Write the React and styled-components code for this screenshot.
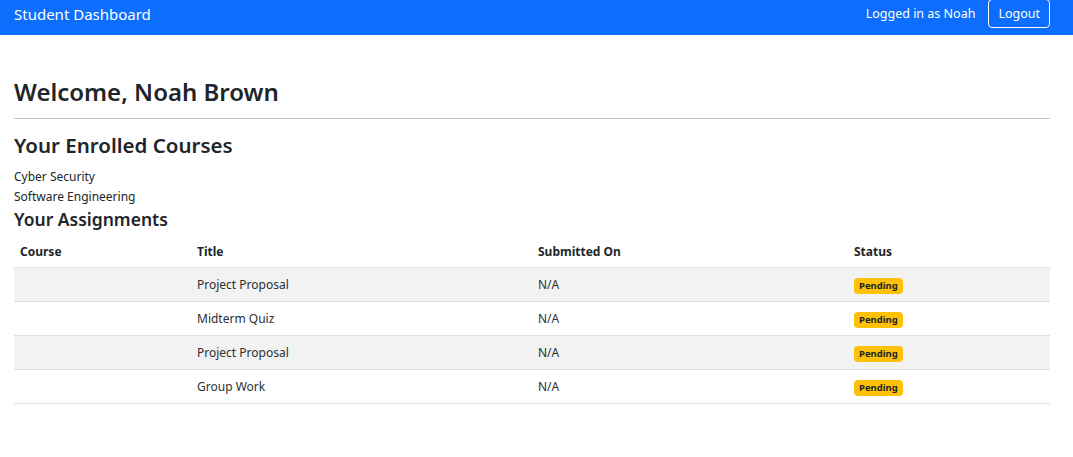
import React from 'react';
import styled, { createGlobalStyle } from 'styled-components';

const GlobalStyle = createGlobalStyle`
  body {
    margin: 0;
    font-family: "Noto Sans", "Open Sans", sans-serif;
    color: #212529;
    background: #fff;
  }
`;

const Navbar = styled.nav`
  height: 35px;
  box-sizing: border-box;
  background: #0d6efd;
  display: flex;
  align-items: flex-start;
  justify-content: space-between;
  padding: 0 23px 0 14px;
`;

const Brand = styled.div`
  color: #fff;
  font-size: 15px;
  line-height: 28px;
`;

const NavRight = styled.div`
  display: flex;
  align-items: center;
  gap: 13px;
`;

const NavText = styled.span`
  color: #fff;
  font-size: 12.5px;
  line-height: 28px;
`;

const LogoutButton = styled.button`
  background: transparent;
  border: 1px solid #fff;
  border-radius: 4px;
  color: #fff;
  font-family: inherit;
  font-size: 12.5px;
  height: 29px;
  margin-top: -1px;
  padding: 0 9px;
  cursor: pointer;
`;

const Main = styled.main`
  padding: 40px 23px 0 14px;
`;

const Heading = styled.h1`
  font-size: 24px;
  font-weight: 600;
  margin: 0;
  line-height: 33px;
`;

const Divider = styled.hr`
  border: none;
  border-top: 1px solid #c4c4c4;
  margin: 10px 0 12px;
`;

const SubHeading = styled.h2`
  font-size: 20.5px;
  font-weight: 600;
  margin: 0 0 7px;
  line-height: 29px;
`;

const SectionHeading = styled.h3`
  font-size: 17.5px;
  font-weight: 600;
  margin: 0;
  line-height: 24px;
`;

const CourseList = styled.div`
  display: flex;
  flex-direction: column;
`;

const CourseItem = styled.div`
  font-size: 12px;
  line-height: 20px;
`;

const Table = styled.table`
  width: 100%;
  table-layout: fixed;
  border-collapse: collapse;
  margin-top: 4px;
  font-size: 12px;
`;

const Th = styled.th`
  text-align: left;
  font-weight: 700;
  padding: 0 6px;
  height: 32px;
  border-bottom: 1px solid #dee2e6;
  width: ${({ $w }) => $w || 'auto'};
`;

const Row = styled.tr`
  background: ${({ $striped }) => ($striped ? '#f2f2f2' : '#fff')};
`;

const Td = styled.td`
  padding: 0 6px;
  height: 33px;
  border-bottom: 1px solid #dee2e6;
  color: #2b2f33;
`;

const Badge = styled.span`
  display: inline-block;
  background: #ffc107;
  color: #212529;
  font-size: 9.5px;
  font-weight: 700;
  line-height: 16px;
  padding: 0 5px;
  border-radius: 4px;
`;

const assignments = [
  { title: 'Project Proposal' },
  { title: 'Midterm Quiz' },
  { title: 'Project Proposal' },
  { title: 'Group Work' },
];

const App = () => (
  <>
    <GlobalStyle />
    <Navbar>
      <Brand>Student Dashboard</Brand>
      <NavRight>
        <NavText>Logged in as Noah</NavText>
        <LogoutButton>Logout</LogoutButton>
      </NavRight>
    </Navbar>
    <Main>
      <Heading>Welcome, Noah Brown</Heading>
      <Divider />
      <SubHeading>Your Enrolled Courses</SubHeading>
      <CourseList>
        <CourseItem>Cyber Security</CourseItem>
        <CourseItem>Software Engineering</CourseItem>
      </CourseList>
      <SectionHeading>Your Assignments</SectionHeading>
      <Table>
        <thead>
          <tr>
            <Th $w="165px">Course</Th>
            <Th $w="329px">Title</Th>
            <Th $w="304px">Submitted On</Th>
            <Th>Status</Th>
          </tr>
        </thead>
        <tbody>
          {assignments.map((a, i) => (
            <Row key={i} $striped={i % 2 === 0}>
              <Td></Td>
              <Td>{a.title}</Td>
              <Td>N/A</Td>
              <Td>
                <Badge>Pending</Badge>
              </Td>
            </Row>
          ))}
        </tbody>
      </Table>
    </Main>
  </>
);

export default App;
